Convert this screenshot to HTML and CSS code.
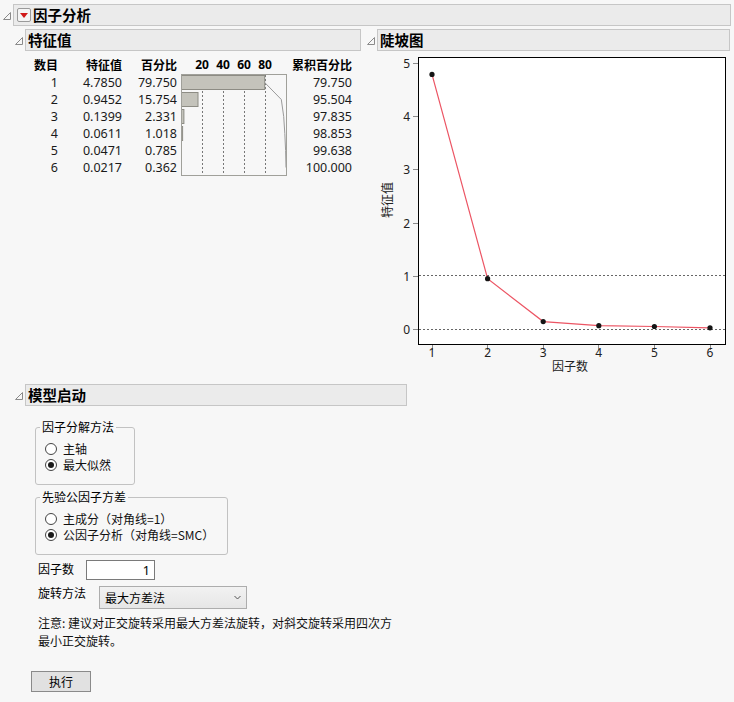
FILE: index.html
```html
<!DOCTYPE html>
<html>
<head>
  <meta charset="UTF-8">
  <title>因子分析</title>
  <link rel="stylesheet" href="styles.css">
</head>
<body>
  <div class="report">
    <div class="ol-head">
      <svg class="disc" width="8" height="8" viewBox="0 0 8 8"><polygon points="7.5,0.5 7.5,7.5 0.5,7.5" /></svg>
      <div class="title-bar">
        <span class="menu-btn"><svg width="8" height="5" viewBox="0 0 8 5"><polygon points="0,0 8,0 4,5" /></svg></span>
        因子分析
      </div>
    </div>

    <div class="ol-body">
      <div class="cols">
        <div class="col-left">
          <div class="ol-head">
            <svg class="disc" width="8" height="8" viewBox="0 0 8 8"><polygon points="7.5,0.5 7.5,7.5 0.5,7.5" /></svg>
            <div class="title-bar">特征值</div>
          </div>

          <div class="eig">
            <div class="h">数目</div>
            <div class="h">特征值</div>
            <div class="h">百分比</div>
            <div class="h scale"><span>20</span><span>40</span><span>60</span><span>80</span></div>
            <div class="h">累积百分比</div>

            <svg class="pct-chart" width="106" height="102" viewBox="0 0 106 102">
              <g class="grid-lines">
                <line x1="21.5" y1="1" x2="21.5" y2="101" />
                <line x1="42.5" y1="1" x2="42.5" y2="101" />
                <line x1="63.5" y1="1" x2="63.5" y2="101" />
                <line x1="84.5" y1="1" x2="84.5" y2="101" />
              </g>
              <g class="bars">
                <rect x="0.5" y="1.5" width="83.2" height="14" />
                <rect x="0.5" y="18.5" width="16.5" height="14" />
                <rect x="0.5" y="35.5" width="2.4" height="14" />
                <rect x="0.5" y="52.5" width="1.1" height="14" />
              </g>
              <polyline class="cum" points="83.7,8.5 100.3,25.5 102.7,42.5 103.8,59.5 104.6,76.5 105,93.5" />
              <rect class="frame" x="0.5" y="0.5" width="105" height="101" />
            </svg>

            <div>1</div><div>4.7850</div><div>79.750</div><div>79.750</div>
            <div>2</div><div>0.9452</div><div>15.754</div><div>95.504</div>
            <div>3</div><div>0.1399</div><div>2.331</div><div>97.835</div>
            <div>4</div><div>0.0611</div><div>1.018</div><div>98.853</div>
            <div>5</div><div>0.0471</div><div>0.785</div><div>99.638</div>
            <div>6</div><div>0.0217</div><div>0.362</div><div>100.000</div>
          </div>
        </div>

        <div class="col-right">
          <div class="ol-head">
            <svg class="disc" width="8" height="8" viewBox="0 0 8 8"><polygon points="7.5,0.5 7.5,7.5 0.5,7.5" /></svg>
            <div class="title-bar">陡坡图</div>
          </div>

          <svg class="scree" width="363" height="330" viewBox="0 0 363 330">
            <rect class="plot-bg" x="51.5" y="6.5" width="307" height="287" />
            <g class="ref-lines">
              <line x1="52" y1="224.5" x2="358" y2="224.5" />
              <line x1="52" y1="278.5" x2="358" y2="278.5" />
            </g>
            <g class="ticks">
              <line x1="46" y1="278.5" x2="51" y2="278.5" />
              <line x1="46" y1="225.5" x2="51" y2="225.5" />
              <line x1="46" y1="172.5" x2="51" y2="172.5" />
              <line x1="46" y1="118.5" x2="51" y2="118.5" />
              <line x1="46" y1="65.5" x2="51" y2="65.5" />
              <line x1="46" y1="12.5" x2="51" y2="12.5" />
              <line x1="65.5" y1="294" x2="65.5" y2="299" />
              <line x1="120.5" y1="294" x2="120.5" y2="299" />
              <line x1="176.5" y1="294" x2="176.5" y2="299" />
              <line x1="231.5" y1="294" x2="231.5" y2="299" />
              <line x1="287.5" y1="294" x2="287.5" y2="299" />
              <line x1="343.5" y1="294" x2="343.5" y2="299" />
            </g>
            <g class="y-labels">
              <text x="43" y="283">0</text>
              <text x="43" y="230">1</text>
              <text x="43" y="177">2</text>
              <text x="43" y="123">3</text>
              <text x="43" y="70">4</text>
              <text x="43" y="17">5</text>
            </g>
            <g class="x-labels">
              <text x="65" y="306">1</text>
              <text x="120.6" y="306">2</text>
              <text x="176.2" y="306">3</text>
              <text x="231.8" y="306">4</text>
              <text x="287.4" y="306">5</text>
              <text x="343" y="306">6</text>
            </g>
            <text class="axis-title" x="203" y="320">因子数</text>
            <text class="axis-title" transform="translate(25,149) rotate(-90)">特征值</text>
            <polyline class="scree-line" points="65,23.4 120.6,227.7 176.2,270.6 231.8,274.7 287.4,275.5 343,276.8" />
            <g class="pts">
              <circle cx="65" cy="23.4" r="2.6" />
              <circle cx="120.6" cy="227.7" r="2.6" />
              <circle cx="176.2" cy="270.6" r="2.6" />
              <circle cx="231.8" cy="274.7" r="2.6" />
              <circle cx="287.4" cy="275.5" r="2.6" />
              <circle cx="343" cy="276.8" r="2.6" />
            </g>
            <rect class="plot-frame" x="51.5" y="6.5" width="307" height="287" />
          </svg>
        </div>
      </div>

      <div class="ol-head model-head">
        <svg class="disc" width="8" height="8" viewBox="0 0 8 8"><polygon points="7.5,0.5 7.5,7.5 0.5,7.5" /></svg>
        <div class="title-bar">模型启动</div>
      </div>

      <div class="model-body">
        <fieldset class="group g1">
          <legend>因子分解方法</legend>
          <div class="radio"><span class="dot"></span>主轴</div>
          <div class="radio"><span class="dot on"></span>最大似然</div>
        </fieldset>

        <fieldset class="group g2">
          <legend>先验公因子方差</legend>
          <div class="radio"><span class="dot"></span>主成分（对角线=1）</div>
          <div class="radio"><span class="dot on"></span>公因子分析（对角线=SMC）</div>
        </fieldset>

        <div class="field-row">
          <label class="lbl-n" for="nfac">因子数</label>
          <input id="nfac" class="num-input" type="text" value="1">
        </div>

        <div class="field-row rot-row">
          <span class="lbl-r">旋转方法</span>
          <div class="combo">
            <span>最大方差法</span>
            <svg width="7" height="5" viewBox="0 0 7 5"><polyline points="0.5,1 3.5,4 6.5,1" /></svg>
          </div>
        </div>

        <p class="note">注意: 建议对正交旋转采用最大方差法旋转，对斜交旋转采用四次方<br>最小正交旋转。</p>

        <button class="btn-run">执行</button>
      </div>
    </div>
  </div>
</body>
</html>
```

FILE: styles.css
```css
body {
  margin: 0;
  background-color: #f7f7f7;
  font-family: "Noto Sans", "Noto Sans CJK SC", sans-serif;
  font-size: 12px;
  color: #000;
}
.report {
  padding: 4px 3px 0 3px;
}
.ol-head {
  display: flex;
  align-items: center;
}
.disc {
  flex: none;
  margin-right: 2px;
  margin-top: 2px;
}
.disc polygon {
  fill: none;
  stroke: #8a8a8a;
  stroke-width: 1;
}
.title-bar {
  flex: 1;
  display: flex;
  align-items: center;
  height: 20px;
  border: 1px solid #c6c6c6;
  background-color: #ebebeb;
  font-family: "Noto Sans CJK SC", sans-serif;
  font-size: 14.5px;
  font-weight: bold;
  line-height: 20px;
  padding-left: 2px;
}
.menu-btn {
  display: inline-flex;
  align-items: center;
  justify-content: center;
  width: 12px;
  height: 12px;
  border: 1px solid #9a9a9a;
  border-radius: 2px;
  background-color: #f4f4f4;
  margin: 0 2px 0 1px;
}
.menu-btn polygon {
  fill: #d01818;
}
.ol-body {
  margin-left: 12px;
}
.cols {
  display: flex;
  margin-top: 3px;
}
.col-left {
  width: 346px;
}
.col-right {
  width: 363px;
  margin-left: 6px;
}

/* eigenvalue table */
.eig {
  display: grid;
  grid-template-columns: 25px 64px 55px 110px 65px;
  grid-auto-rows: 17px;
  grid-template-rows: 18px;
  margin: 5px 0 0 18px;
  line-height: 17px;
  font-size: 12.5px;
  text-align: right;
  color: #1a1a1a;
}
.eig .h {
  font-family: "Noto Sans CJK SC", sans-serif;
  font-size: 12px;
  font-weight: bold;
  line-height: 18px;
  color: #000;
}
.eig .scale {
  display: flex;
  padding-left: 14.5px;
  font-family: "Noto Sans", sans-serif;
}
.scale span {
  width: 21px;
  text-align: center;
}
.pct-chart {
  grid-column: 4;
  grid-row: 2 / span 6;
  justify-self: end;
}
.grid-lines line {
  stroke: #777;
  stroke-dasharray: 2 2;
}
.bars rect {
  fill: #c4c3bb;
  stroke: #8d8c84;
  stroke-width: 1;
}
.cum {
  fill: none;
  stroke: #9a9a9a;
  stroke-width: 1;
}
.frame {
  fill: none;
  stroke: #a0a09a;
}

/* scree plot */
.scree {
  display: block;
  font-family: "Noto Sans", "Noto Sans CJK SC", sans-serif;
  font-size: 12px;
}
.plot-bg {
  fill: #fff;
}
.plot-frame {
  fill: none;
  stroke: #000;
  stroke-width: 1;
}
.ref-lines line {
  stroke: #666;
  stroke-dasharray: 2 2;
}
.ticks line {
  stroke: #8a8a8a;
}
.y-labels text {
  text-anchor: end;
  fill: #222;
}
.x-labels text {
  text-anchor: middle;
  fill: #222;
}
.axis-title {
  text-anchor: middle;
  font-family: "Noto Sans CJK SC", sans-serif;
  fill: #222;
}
.scree-line {
  fill: none;
  stroke: #ec5564;
  stroke-width: 1.2;
}
.pts circle {
  fill: #151515;
}

/* model launch */
.model-head {
  margin-top: 3px;
}
.model-head .title-bar {
  flex: none;
  width: 378px;
}
.model-body {
  padding: 13px 0 0 20px;
  font-family: "Noto Sans CJK SC", sans-serif;
  font-size: 12px;
  line-height: 16px;
}
.group {
  box-sizing: border-box;
  margin: 0;
  padding: 6px 4px 11px 4px;
  border: 1px solid #c2c2c2;
  border-radius: 3px;
}
.group legend {
  padding: 0 2px;
}
.g1 {
  width: 100px;
}
.g2 {
  width: 193px;
  margin-top: 4px;
}
.radio {
  display: flex;
  align-items: center;
  padding-left: 5px;
  height: 16px;
  color: #111;
}
.dot {
  box-sizing: border-box;
  width: 12px;
  height: 12px;
  border: 1px solid #444;
  border-radius: 50%;
  background-color: #fff;
  margin-right: 6px;
  display: flex;
  align-items: center;
  justify-content: center;
}
.dot.on::after {
  content: "";
  width: 6px;
  height: 6px;
  border-radius: 50%;
  background-color: #1a1a1a;
}
.field-row {
  display: flex;
  align-items: flex-start;
  margin-top: 5px;
  padding-left: 3px;
}
.lbl-n {
  width: 48px;
  line-height: 16px;
  padding-top: 1px;
}
.num-input {
  box-sizing: border-box;
  width: 69px;
  height: 20px;
  border: 1px solid #7a7a7a;
  background-color: #fff;
  text-align: right;
  font-family: "Noto Sans", sans-serif;
  font-size: 12.5px;
  padding: 0 4px;
  margin: 0;
}
.rot-row {
  margin-top: 6px;
}
.lbl-r {
  width: 61px;
  line-height: 14px;
}
.combo {
  box-sizing: border-box;
  width: 148px;
  height: 23px;
  border: 1px solid #adadad;
  background: linear-gradient(#f2f2f2, #e6e6e6);
  display: flex;
  align-items: center;
  justify-content: space-between;
  padding: 0 5px 0 5px;
}
.combo polyline {
  fill: none;
  stroke: #555;
  stroke-width: 1;
}
.note {
  margin: 5px 0 0 3px;
  line-height: 18px;
  color: #111;
}
.btn-run {
  display: block;
  margin: 21px 0 0 -4px;
  width: 60px;
  height: 21px;
  border: 1px solid #8a8a8a;
  background-color: #e1e1e1;
  font-family: "Noto Sans CJK SC", sans-serif;
  font-size: 12px;
  padding: 0;
  color: #000;
}
```
